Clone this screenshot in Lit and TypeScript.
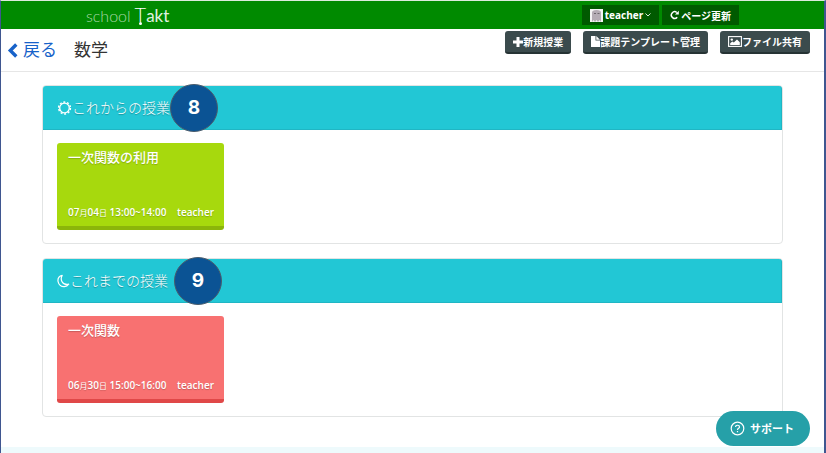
import { LitElement, html, css, svg } from "lit";
import { customElement, property } from "lit/decorators.js";

const fonts = css`"Open Sans", "Noto Sans CJK JP", sans-serif`;

interface Lesson {
  title: string;
  month: string;
  day: string;
  time: string;
  teacher: string;
  tone: "green" | "red";
}

const upcoming: Lesson[] = [
  { title: "一次関数の利用", month: "07", day: "04", time: "13:00~14:00", teacher: "teacher", tone: "green" },
];
const past: Lesson[] = [
  { title: "一次関数", month: "06", day: "30", time: "15:00~16:00", teacher: "teacher", tone: "red" },
];

const sunIcon = svg`<svg width="15" height="14" viewBox="0 0 15 14" fill="none" stroke="#fff">
  <circle cx="7.5" cy="7" r="4.8" stroke-width="1.3"/>
  <circle cx="7.5" cy="7" r="5.9" stroke-width="1.5" stroke-dasharray="2 1.7"/>
</svg>`;
const moonIcon = svg`<svg width="13" height="14" viewBox="0 0 13 14" fill="none" stroke="#fff" stroke-width="1.2" stroke-linejoin="round">
  <path d="M5.2 1.4C1.8 2.2.6 5 1.1 7.7c.6 3.2 3.4 5.1 6.3 4.9 1.9-.1 3.3-1 4.3-2.4-3 .6-5.6-.4-6.8-2.8-1-2-.8-4.2.3-6z"/>
</svg>`;

@customElement("lesson-card")
export class LessonCard extends LitElement {
  @property({ attribute: false }) lesson!: Lesson;

  static styles = css`
    :host { display: block; width: 167px; }
    .card {
      box-sizing: border-box;
      display: flex;
      flex-direction: column;
      justify-content: space-between;
      width: 100%;
      height: 87px;
      padding: 4px 10px 7px 11px;
      border: 0;
      border-bottom: 4px solid;
      border-radius: 3px;
      color: #fff;
      font-family: ${fonts};
      text-align: left;
      text-shadow: 0 1px 1px rgba(0, 0, 0, 0.2);
      cursor: pointer;
    }
    .green { background: #a7d90d; border-color: #8bb50a; }
    .red { background: #f87171; border-color: #e04848; }
    .title { font-size: 13px; line-height: 20px; font-weight: 500; }
    .meta {
      display: flex;
      justify-content: space-between;
      font-size: 10px;
      line-height: 12px;
      font-weight: 600;
      white-space: nowrap;
    }
    .unit { font-size: 8px; font-weight: 400; }
  `;

  render() {
    const l = this.lesson;
    return html`<button class="card ${l.tone}">
      <span class="title">${l.title}</span>
      <span class="meta">
        <span>${l.month}<span class="unit">月</span>${l.day}<span class="unit">日</span> ${l.time}</span>
        <span>${l.teacher}</span>
      </span>
    </button>`;
  }
}

@customElement("lesson-panel")
export class LessonPanel extends LitElement {
  @property() heading = "";
  @property() step = "";
  @property({ attribute: false }) icon: unknown;
  @property({ attribute: false }) lessons: Lesson[] = [];

  static styles = css`
    :host { display: block; }
    .panel {
      border: 1px solid #e2e4e4;
      border-radius: 4px;
      background: #fff;
    }
    .head {
      box-sizing: border-box;
      display: flex;
      align-items: center;
      height: 44px;
      padding-left: 14px;
      border: 1px solid #20b6c4;
      border-width: 0 1px 1px 0;
      border-radius: 3px 3px 0 0;
      background: #22c7d5;
      color: #fff;
    }
    .title {
      position: relative;
      display: flex;
      align-items: center;
      margin: 0;
      font: 300 14px/20px ${fonts};
      text-shadow: 0 1px 1px rgba(0, 0, 0, 0.3);
    }
    .step {
      position: absolute;
      left: 100%;
      top: -14px;
      display: grid;
      place-items: center;
      box-sizing: border-box;
      width: 48px;
      height: 48px;
      border: 1px solid #4a5c6c;
      border-radius: 50%;
      background: #0b5394;
      font: 700 19px/24px Inter, sans-serif;
      text-shadow: none;
    }
    .spaced { margin-left: 6px; }
    .body { display: flex; flex-wrap: wrap; gap: 14px; padding: 13px 14px; }
  `;

  render() {
    return html`<section class="panel">
      <header class="head">
        <h2 class="title">
          ${this.icon}<span>${this.heading}</span>
          <span class="step ${this.step === "9" ? "spaced" : ""}">${this.step}</span>
        </h2>
      </header>
      <div class="body">
        ${this.lessons.map((l) => html`<lesson-card .lesson=${l}></lesson-card>`)}
      </div>
    </section>`;
  }
}

@customElement("app-root")
export class AppRoot extends LitElement {
  static styles = css`
    :host { display: block; font-family: ${fonts}; color: #333; }
    .page {
      box-sizing: border-box;
      display: flex;
      flex-direction: column;
      min-height: 100vh;
      border: 1px solid #3f5690;
      border-width: 0 2px 0 1px;
      border-top: 1px solid #dcebdc;
      background: #fff;
    }
    button { cursor: pointer; font-family: inherit; }
    svg { flex: none; }
    .top {
      box-sizing: border-box;
      display: flex;
      align-items: center;
      justify-content: space-between;
      height: 28px;
      padding: 0 85px 0 85px;
      background: #008a00;
    }
    .logo {
      display: flex;
      align-items: baseline;
      color: #fff;
      font: 300 17px/24px Lato, sans-serif;
      text-decoration: none;
    }
    .school { color: #a8d8a8; font-size: 16px; margin-right: 4px; }
    .tall { position: relative; font-size: 20px; }
    .tall::after {
      content: "";
      position: absolute;
      left: 4px;
      bottom: 1px;
      width: 3px;
      height: 3px;
      border-radius: 50%;
      background: #fff;
    }
    .akt { font-weight: 400; font-size: 17px; color: #e0f2e0; }
    .tools { display: flex; gap: 3px; }
    .tool {
      display: flex;
      align-items: center;
      justify-content: center;
      height: 20px;
      padding: 0 8px;
      border: 0;
      background: #005a00;
      color: #fff;
      font-size: 10px;
      font-weight: 700;
      gap: 2px;
    }
    .bar {
      box-sizing: border-box;
      display: flex;
      justify-content: space-between;
      align-items: flex-start;
      height: 43px;
      padding: 2px 14px 0 6px;
      border-bottom: 1px solid #e6e6e6;
    }
    .crumbs { display: flex; align-items: center; gap: 17px; padding-top: 7px; }
    .back {
      display: flex;
      align-items: center;
      gap: 5px;
      color: #1762c9;
      font-size: 17px;
      line-height: 24px;
      text-decoration: none;
    }
    .subject { margin: 0; font-size: 17px; line-height: 24px; font-weight: 400; }
    .actions { display: flex; gap: 12px; }
    .action {
      box-sizing: border-box;
      display: flex;
      align-items: center;
      height: 23px;
      padding: 0 8px;
      border: 0;
      border-bottom: 2px solid #263334;
      border-radius: 3px;
      background: #3b4b4d;
      color: #fff;
      font-size: 10px;
      font-weight: 700;
      white-space: nowrap;
    }
    .main {
      flex: 1;
      display: flex;
      flex-direction: column;
      gap: 14px;
      padding: 13px 41px 0;
    }
    .foot { height: 6px; background: #eefafc; }
    .support {
      position: fixed;
      right: 16px;
      bottom: 7px;
      display: flex;
      align-items: center;
      gap: 5px;
      height: 35px;
      padding: 0 16px 0 14px;
      border: 0;
      border-radius: 18px;
      background: #26a0a8;
      color: #fff;
      font-size: 11px;
      line-height: 16px;
      font-weight: 700;
    }
  `;

  render() {
    return html`<div class="page">
      <header class="top">
        <a class="logo" href="#"><span class="school">school</span><span class="tall">T</span><span class="akt">akt</span></a>
        <div class="tools">
          <button class="tool">
            <svg width="13" height="13" viewBox="0 0 13 13">
              <rect width="13" height="13" fill="#f4f4f4"/>
              <path d="M2 13V3.5Q2 1 6.5 1T11 3.5V13l-1.5-2L8 13l-1.5-2L5 13l-1.5-2z" fill="#b4acb4"/>
              <path d="M4 4h2v1H4zM7.500 4h2v1h-2z" fill="#6d666d"/>
            </svg>
            teacher
            <svg width="6" height="6" viewBox="0 0 6 6" fill="none" stroke="#d5e8d5"><path d="M.5 1.500 3 4l2.500-2.500"/></svg>
          </button>
          <button class="tool">
            <svg width="9" height="10" viewBox="0 0 9 10"><path d="M7.200 7.200A3.300 3.300 0 1 1 6.800 2.500" fill="none" stroke="#fff" stroke-width="1.500"/><path d="M8.800.8v3.700H5z" fill="#fff"/></svg>
            ページ更新
          </button>
        </div>
      </header>
      <div class="bar">
        <nav class="crumbs">
          <a class="back" href="#">
            <svg width="11" height="15" viewBox="0 0 11 15" fill="none" stroke="#1762c9" stroke-width="3.400"><path d="M9.300 1.500 3.300 7.500l6 6"/></svg>
            戻る
          </a>
          <h1 class="subject">数学</h1>
        </nav>
        <div class="actions">
          <button class="action">
            <svg width="10" height="10" viewBox="0 0 10 10" fill="#fff"><path d="M3.500 0h3v3.500H10v3H6.500V10h-3V6.500H0v-3h3.500z"/></svg>新規授業
          </button>
          <button class="action">
            <svg width="9" height="11" viewBox="0 0 9 11" fill="#fff"><path d="M0 0h4.500v4.500H9V11H0zM5.300 0 9 3.700H5.300z"/></svg>課題テンプレート管理
          </button>
          <button class="action">
            <svg width="14" height="11" viewBox="0 0 14 11"><rect x=".6" y=".6" width="12.800" height="9.800" fill="none" stroke="#fff" stroke-width="1.100"/><circle cx="3.800" cy="3.600" r="1.200" fill="#fff"/><path d="M2.200 9V7.200L4.300 5.400l1.500 1.200L9 3.400l2.800 2.800V9z" fill="#fff"/></svg>ファイル共有
          </button>
        </div>
      </div>
      <main class="main">
        <lesson-panel heading="これからの授業" step="8" .icon=${sunIcon} .lessons=${upcoming}></lesson-panel>
        <lesson-panel heading="これまでの授業" step="9" .icon=${moonIcon} .lessons=${past}></lesson-panel>
      </main>
      <div class="foot"></div>
      <button class="support">
        <svg width="15" height="15" viewBox="0 0 15 15" fill="none" stroke="#fff" stroke-width="1.200"><circle cx="7.500" cy="7.500" r="6.300"/><path d="M5.600 6.100c0-2.500 3.900-2.400 3.900-.1 0 1.300-2 1.400-2 2.900M7.500 10v1.300"/></svg>
        サポート
      </button>
    </div>`;
  }
}
